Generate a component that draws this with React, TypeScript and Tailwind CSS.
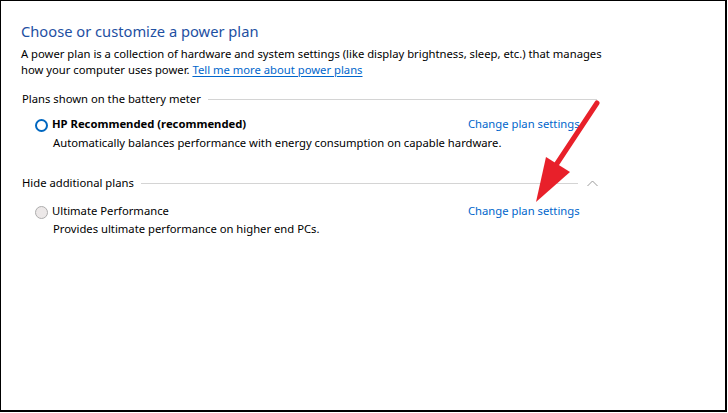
import React from "react";

function Radio({ checked }: { checked: boolean }) {
  return checked ? (
    <span className="box-border inline-block w-[13px] h-[13px] rounded-full border-[2.5px] border-[#0067c0] bg-white shrink-0" />
  ) : (
    <span className="box-border inline-block w-[13px] h-[13px] rounded-full border border-[#adadad] bg-[#ece8e8] shrink-0" />
  );
}

function SectionHeader({ label, chevron }: { label: string; chevron?: boolean }) {
  return (
    <div className="flex items-center w-[575px] leading-[16px]">
      <span className="text-black">{label}</span>
      <span className="flex-1 h-px bg-[#d4d4d4] ml-[7px]" />
      {chevron ? (
        <svg className="ml-[9px] mr-[-1px]" width="11" height="7" viewBox="0 0 11 7">
          <path d="M0.5 6 L5.5 1 L10.5 6" fill="none" stroke="#9a9a9a" strokeWidth="1" />
        </svg>
      ) : null}
    </div>
  );
}

function PlanRow({
  checked,
  name,
  desc,
  bold,
  descGap,
}: {
  checked: boolean;
  name: string;
  desc: string;
  bold?: boolean;
  descGap: string;
}) {
  return (
    <div>
      <div className="grid grid-cols-[433px_auto] pl-[14px] leading-[16px] items-center">
        <div className="flex items-center gap-[4px]">
          <span className="mt-[2px] flex"><Radio checked={checked} /></span>
          <span className={bold ? "font-bold text-black" : "text-black"}>{name}</span>
        </div>
        <a className="text-[#0066cc]">Change plan settings</a>
      </div>
      <p className={`${descGap} pl-[32px] leading-[16px] text-black`}>{desc}</p>
    </div>
  );
}

export default function App() {
  return (
    <div className="relative w-[727px] h-[412px] bg-white border-l border-t border-r-2 border-b-2 border-black font-['Noto_Sans',sans-serif] text-[11.25px] overflow-hidden">
      <div className="pl-[20px] pt-[19px]">
        <h1 className="text-[14.7px] leading-[22px] text-[#1e50a2] font-normal">
          Choose or customize a power plan
        </h1>
        <p className="mt-[4px] leading-[16px] text-black w-[620px]">
          A power plan is a collection of hardware and system settings (like display brightness, sleep, etc.) that manages
          <br />
          how your computer uses power.{" "}
          <a className="text-[#0066cc] underline underline-offset-[2px]">Tell me more about power plans</a>
        </p>

        <div className="mt-[13px] pl-[1px]">
          <SectionHeader label="Plans shown on the battery meter" />
        </div>
        <div className="mt-[9px]">
          <PlanRow
            checked
            bold
            name="HP Recommended (recommended)"
            desc="Automatically balances performance with energy consumption on capable hardware."
            descGap="mt-[3px]"
          />
        </div>

        <div className="mt-[24px] pl-[1px]">
          <SectionHeader label="Hide additional plans" chevron />
        </div>
        <div className="mt-[12px]">
          <PlanRow
            checked={false}
            name="Ultimate Performance"
            desc="Provides ultimate performance on higher end PCs."
            descGap="mt-[2px]"
          />
        </div>
      </div>

      <svg className="absolute left-0 top-0 pointer-events-none" width="728" height="413" viewBox="0 0 728 413">
        <line x1="596" y1="102" x2="553" y2="167" stroke="#e8202a" strokeWidth="5" strokeLinecap="round" />
        <polygon points="535,201 545,156 569,171" fill="#e8202a" />
      </svg>
    </div>
  );
}
